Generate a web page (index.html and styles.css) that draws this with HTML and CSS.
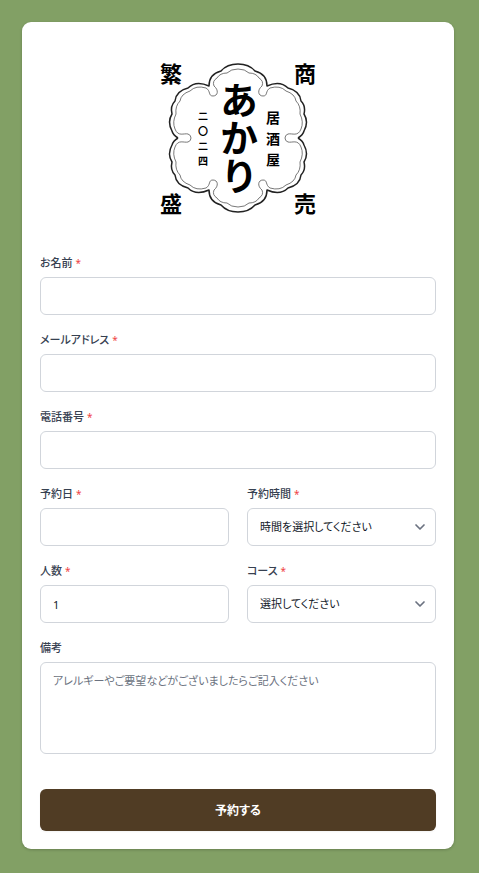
FILE: index.html
```html
<!DOCTYPE html>
<html lang="ja">
<head>
<meta charset="UTF-8">
<meta name="viewport" content="width=device-width, initial-scale=1.0">
<title>居酒屋 あかり</title>
<link rel="stylesheet" href="styles.css">
</head>
<body>
<main class="reserve-container">
    <svg class="logo" viewBox="0 0 160 160" role="img" aria-label="居酒屋 あかり">
        <defs>
            <g id="frame-quarter">
                <path class="frame-outer" d="M80 6 Q69 6 63 13 Q51 16 51 28 Q38 22 30 30 Q18 33 17 43 Q12 48 14 56 Q9 64 14 73 Q15 77 20 80"/>
                <path class="frame-inner" d="M80 11 Q73 11 69 15 Q62 15 59 20 Q54 23 56 28 C61 32 60 38 55 38 C50 38 53 33 48 30 Q38 27 32 33 Q23 36 22 43 Q17 48 18 56 Q14 64 17 71 C20 79 26 75 30 76 Q33 77 33 80"/>
            </g>
            <g id="frame-half">
                <use href="#frame-quarter"/>
                <use href="#frame-quarter" transform="matrix(1 0 0 -1 0 160)"/>
            </g>
        </defs>
        <use href="#frame-half"/>
        <use href="#frame-half" transform="matrix(-1 0 0 1 160 0)"/>
        <g class="logo-corner">
            <text x="13" y="24">繁</text>
            <text x="147" y="24">商</text>
            <text x="13" y="154">盛</text>
            <text x="147" y="154">売</text>
        </g>
        <text class="logo-name" x="81" y="23">あかり</text>
        <g class="logo-kind">
            <text x="115" y="65">居</text>
            <text x="115" y="86">酒</text>
            <text x="115" y="107">屋</text>
        </g>
        <g class="logo-year">
            <text x="45" y="62">二</text>
            <text x="45" y="77">〇</text>
            <text x="45" y="92">二</text>
            <text x="45" y="107">四</text>
        </g>
    </svg>

    <form class="reserve-form">
        <div class="field">
            <label for="name">お名前 <span class="required">*</span></label>
            <input type="text" id="name" required>
        </div>
        <div class="field">
            <label for="email">メールアドレス <span class="required">*</span></label>
            <input type="email" id="email" required>
        </div>
        <div class="field">
            <label for="tel">電話番号 <span class="required">*</span></label>
            <input type="tel" id="tel" required>
        </div>
        <div class="field-row">
            <div class="field">
                <label for="date">予約日 <span class="required">*</span></label>
                <input type="date" id="date" required>
            </div>
            <div class="field">
                <label for="time">予約時間 <span class="required">*</span></label>
                <div class="select-box">
                    <select id="time" required>
                        <option value="">時間を選択してください</option>
                    </select>
                    <svg class="chevron" viewBox="0 0 20 20" aria-hidden="true"><path d="M6 8l4 4 4-4"/></svg>
                </div>
            </div>
        </div>
        <div class="field-row">
            <div class="field">
                <label for="people">人数 <span class="required">*</span></label>
                <input type="number" id="people" value="1" min="1" required>
            </div>
            <div class="field">
                <label for="course">コース <span class="required">*</span></label>
                <div class="select-box">
                    <select id="course" required>
                        <option value="">選択してください</option>
                    </select>
                    <svg class="chevron" viewBox="0 0 20 20" aria-hidden="true"><path d="M6 8l4 4 4-4"/></svg>
                </div>
            </div>
        </div>
        <div class="field">
            <label for="note">備考</label>
            <textarea id="note" placeholder="アレルギーやご要望などがございましたらご記入ください"></textarea>
        </div>
        <button type="submit" class="btn">予約する</button>
    </form>
</main>
</body>
</html>
```
FILE: styles.css
```css
* {
    box-sizing: border-box;
}
body {
    margin: 0;
    padding: 22px 25px 24px 22px;
    background-color: #82a065;
    font-family: "Noto Sans", "Noto Sans CJK JP", sans-serif;
    font-feature-settings: "palt";
    color: #111827;
}
.reserve-container {
    max-width: 576px;
    margin: 0 auto;
    padding: 18px;
    background-color: white;
    border-radius: 9px;
    box-shadow: 0 1px 3px rgba(0, 0, 0, 0.2);
}

/* ロゴ */
.logo {
    display: block;
    width: 160px;
    height: 160px;
    margin: 18px auto 36px;
    overflow: visible;
    font-family: "Noto Sans CJK JP", sans-serif;
    font-feature-settings: normal;
    font-weight: bold;
    text-anchor: middle;
    fill: #000;
}
.frame-outer, .frame-inner {
    fill: none;
    stroke: #222;
    stroke-width: 1.5;
    stroke-linejoin: round;
}
.frame-inner {
    stroke: #555;
    stroke-width: 0.8;
}
.logo-corner {
    font-size: 22px;
}
.logo-name {
    font-size: 38px;
    writing-mode: vertical-rl;
    text-anchor: start;
}
.logo-kind {
    font-size: 14px;
}
.logo-year {
    font-size: 10px;
}

/* 予約フォーム */
.reserve-form {
    display: flex;
    flex-direction: column;
    gap: 16px;
}
.field {
    display: flex;
    flex-direction: column;
    gap: 5px;
    min-width: 0;
}
.field-row {
    display: grid;
    grid-template-columns: 1fr 1fr;
    gap: 18px;
}
label {
    font-size: 11px;
    line-height: 18px;
    font-weight: 500;
    color: #374151;
}
.required {
    color: #ef4444;
    font-size: 10px;
    font-weight: normal;
}
input, select, textarea {
    display: block;
    width: 100%;
    height: 38px;
    padding: 0 12px;
    border: 1px solid #d1d5db;
    border-radius: 6px;
    background-color: white;
    font-family: inherit;
    font-feature-settings: inherit;
    font-size: 11px;
    line-height: 18px;
    color: inherit;
    outline: none;
    appearance: none;
}
input:focus, select:focus, textarea:focus {
    border-color: #503c24;
}
/* 未入力の日付は表示しない */
input[type="date"]:not(:focus):invalid::-webkit-datetime-edit,
input[type="date"]::-webkit-calendar-picker-indicator {
    opacity: 0;
}
textarea {
    height: 92px;
    padding: 9px 12px;
    resize: none;
}
textarea::placeholder {
    color: #6b7280;
}
.select-box {
    display: grid;
    align-items: center;
}
.select-box select, .chevron {
    grid-area: 1 / 1;
}
.chevron {
    justify-self: end;
    width: 20px;
    height: 20px;
    margin-right: 6px;
    fill: none;
    stroke: #6b7280;
    stroke-width: 1.7;
    stroke-linecap: round;
    stroke-linejoin: round;
    pointer-events: none;
}
.btn {
    height: 42px;
    margin-top: 19px;
    border: none;
    border-radius: 6px;
    background-color: #503c24;
    box-shadow: 0 1px 2px rgba(0, 0, 0, 0.05);
    font-family: inherit;
    font-feature-settings: inherit;
    font-size: 12px;
    font-weight: bold;
    color: white;
    cursor: pointer;
}
.btn:hover {
    background-color: #3f2f1c;
}
```
